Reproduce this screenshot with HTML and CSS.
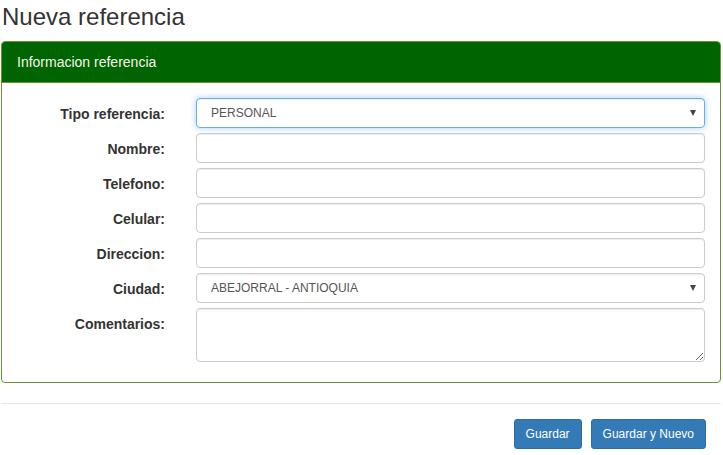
FILE: index.html
```html
<!DOCTYPE html>
<html lang="es">
<head>
<meta charset="utf-8">
<title>Nueva referencia</title>
<link rel="stylesheet" href="styles.css">
</head>
<body>
<div class="page">
  <h3 class="title">Nueva referencia</h3>
  <div class="panel">
    <div class="panel-heading">Informacion referencia</div>
    <form class="panel-body">
      <div class="row">
        <label class="lbl">Tipo referencia:</label>
        <div class="select-wrap">
          <select class="ctl sel focus"><option>PERSONAL</option></select>
          <span class="caret"></span>
        </div>
      </div>
      <div class="row">
        <label class="lbl">Nombre:</label>
        <input class="ctl" type="text">
      </div>
      <div class="row">
        <label class="lbl">Telefono:</label>
        <input class="ctl" type="text">
      </div>
      <div class="row">
        <label class="lbl">Celular:</label>
        <input class="ctl" type="text">
      </div>
      <div class="row">
        <label class="lbl">Direccion:</label>
        <input class="ctl" type="text">
      </div>
      <div class="row">
        <label class="lbl">Ciudad:</label>
        <div class="select-wrap">
          <select class="ctl sel"><option>ABEJORRAL - ANTIOQUIA</option></select>
          <span class="caret"></span>
        </div>
      </div>
      <div class="row">
        <label class="lbl">Comentarios:</label>
        <textarea class="ctl area"></textarea>
      </div>
    </form>
  </div>
  <hr class="sep">
  <div class="actions">
    <button class="btn" type="button">Guardar</button>
    <button class="btn" type="button">Guardar y Nuevo</button>
  </div>
</div>
</body>
</html>
```

FILE: styles.css
```css
html, body {
  margin: 0;
  padding: 0;
  background: #fff;
}
body {
  font-family: "Liberation Sans", Arial, sans-serif;
  font-size: 14px;
  color: #333;
  line-height: 1.42857;
}
.page {
  padding: 0 2px 0 1px;
}
.title {
  font-size: 24px;
  font-weight: normal;
  line-height: 1.1;
  margin: 4px 0 11px 1px;
  color: #333;
}
.panel {
  border: 1px solid #6a9430;
  border-radius: 4px;
  background: #fff;
}
.panel-heading {
  background: #006400;
  color: #f4f4ec;
  padding: 10px 15px;
  border-radius: 3px 3px 0 0;
  border-bottom: 1px solid #6a9430;
  line-height: 20px;
}
.panel-body {
  margin: 0;
  padding: 15px 15px 15px 15px;
}
.row {
  display: flex;
  align-items: flex-start;
  margin-bottom: 5px;
}
.lbl {
  width: 148px;
  flex: none;
  text-align: right;
  font-weight: bold;
  padding-top: 6px;
  line-height: 20px;
  margin-right: 31px;
  color: #333;
}
.ctl {
  flex: 1;
  box-sizing: border-box;
  height: 30px;
  border: 1px solid #ccc;
  border-radius: 4px;
  box-shadow: inset 0 1px 1px rgba(0,0,0,.075);
  font-family: "Liberation Sans", Arial, sans-serif;
  font-size: 12px;
  color: #555;
  padding: 4px 14px;
  background: #fff;
  margin: 0;
  outline: none;
}
.select-wrap {
  flex: 1;
  position: relative;
  display: flex;
}
.sel {
  -webkit-appearance: none;
  appearance: none;
  width: 100%;
}
.focus {
  border-color: #66afe9;
  box-shadow: inset 0 1px 1px rgba(0,0,0,.075), 0 0 6px rgba(102,175,233,.6);
}
.caret {
  position: absolute;
  right: 9px;
  top: 12px;
  width: 0;
  height: 0;
  border-left: 3.5px solid transparent;
  border-right: 3.5px solid transparent;
  border-top: 6px solid #444;
}
.area {
  height: 54px;
  resize: vertical;
}
.sep {
  border: 0;
  border-top: 1px solid #e6e6e6;
  margin: 20px 0 15px 0;
}
.actions {
  display: flex;
  justify-content: flex-end;
  gap: 9px;
  padding-right: 15px;
}
.btn {
  font-family: "Liberation Sans", Arial, sans-serif;
  font-size: 12px;
  line-height: 18px;
  color: #fff;
  background: #337ab7;
  border: 1px solid #2e6da4;
  border-radius: 3px;
  padding: 5px 11px;
  cursor: pointer;
}
```
